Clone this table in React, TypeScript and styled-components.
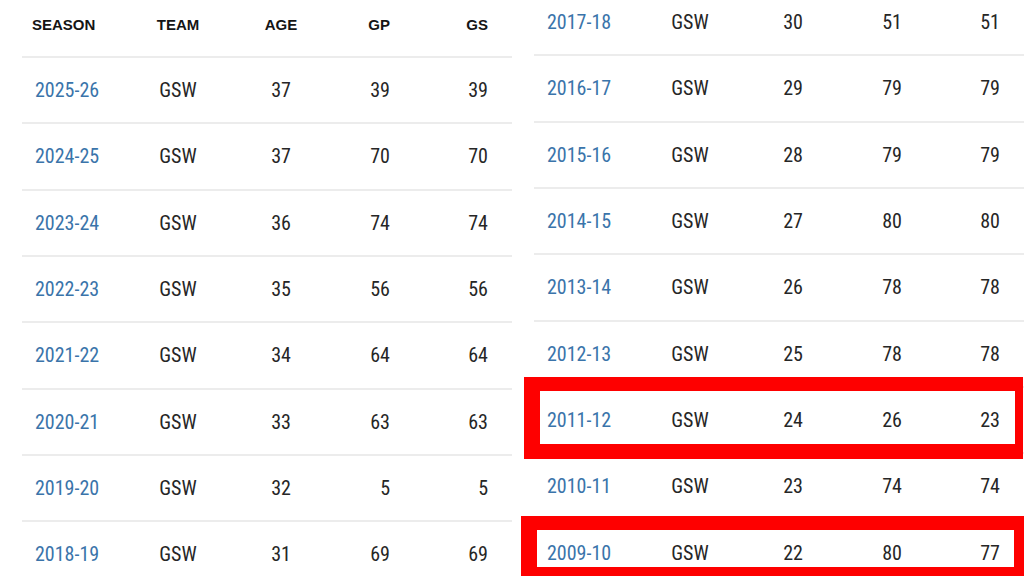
import styled, { createGlobalStyle } from "styled-components";

const GlobalStyle = createGlobalStyle`
  html, body {
    margin: 0;
    padding: 0;
    background: #fff;
    overflow: hidden;
  }
`;

interface IHighlight {
  $top: number;
  $left: number;
  $right: number;
  $bottom: number;
  $border: string;
}

interface IStat {
  season: string;
  age: number;
  gp: number;
  gs: number;
  box?: IHighlight;
}

const Page = styled.div`
  width: 1024px;
  height: 576px;
  display: grid;
  grid-template-columns: 512px 512px;
  overflow: hidden;
  font-family: "Liberation Sans Narrow", "Roboto Condensed", "DejaVu Sans Condensed", Roboto, sans-serif;
`;

const Half = styled.div<{ $shift: number }>`
  display: flex;
  flex-direction: column;
  padding-left: 22px;
  margin-top: ${(p) => p.$shift}px;
`;

const Cols = styled.div`
  display: grid;
  grid-template-columns: 108px 96px 110px 54px 98px;
  padding-right: 24px;
  align-items: center;
  border-bottom: 2px solid #ececec;
  box-sizing: border-box;
  position: relative;
`;

const HeadRow = styled(Cols)`
  height: 58px;
  padding-bottom: 7px;
`;

const Row = styled(Cols)`
  height: 66.33px;
  flex-shrink: 0;
`;

const Th = styled.div<{ $align: string }>`
  font-family: "Liberation Sans", Arial, sans-serif;
  font-size: 15px;
  font-weight: 700;
  color: #151515;
  text-align: ${(p) => p.$align};
  padding-left: ${(p) => (p.$align === "left" ? "10px" : "0")};
`;

const Td = styled.div<{ $align: string }>`
  font-size: 20px;
  color: #262626;
  text-align: ${(p) => p.$align};
`;

const SeasonLink = styled.a`
  font-size: 20px;
  color: #3a74aa;
  text-decoration: none;
  padding-left: 13px;
`;

const Highlight = styled.span<IHighlight>`
  position: absolute;
  top: ${(p) => p.$top}px;
  left: ${(p) => p.$left}px;
  right: ${(p) => p.$right}px;
  bottom: ${(p) => p.$bottom}px;
  border: solid #fe0000;
  border-width: ${(p) => p.$border};
  pointer-events: none;
`;

const leftStats: IStat[] = [
  { season: "2025-26", age: 37, gp: 39, gs: 39 },
  { season: "2024-25", age: 37, gp: 70, gs: 70 },
  { season: "2023-24", age: 36, gp: 74, gs: 74 },
  { season: "2022-23", age: 35, gp: 56, gs: 56 },
  { season: "2021-22", age: 34, gp: 64, gs: 64 },
  { season: "2020-21", age: 33, gp: 63, gs: 63 },
  { season: "2019-20", age: 32, gp: 5, gs: 5 },
  { season: "2018-19", age: 31, gp: 69, gs: 69 },
];

const rightStats: IStat[] = [
  { season: "2017-18", age: 30, gp: 51, gs: 51 },
  { season: "2016-17", age: 29, gp: 79, gs: 79 },
  { season: "2015-16", age: 28, gp: 79, gs: 79 },
  { season: "2014-15", age: 27, gp: 80, gs: 80 },
  { season: "2013-14", age: 26, gp: 78, gs: 78 },
  { season: "2012-13", age: 25, gp: 78, gs: 78 },
  {
    season: "2011-12",
    age: 24,
    gp: 26,
    gs: 23,
    box: { $top: -10.5, $left: -10, $right: 1, $bottom: -6.5, $border: "14px 8px 15px 16px" },
  },
  { season: "2010-11", age: 23, gp: 74, gs: 74 },
  {
    season: "2009-10",
    age: 22,
    gp: 80,
    gs: 77,
    box: { $top: -4.5, $left: -13, $right: -4, $bottom: 5.5, $border: "14px 14px 12px 16px" },
  },
];

function StatRow({ stat }: { stat: IStat }) {
  return (
    <Row>
      <SeasonLink href="#">{stat.season}</SeasonLink>
      <Td $align="center">GSW</Td>
      <Td $align="center">{stat.age}</Td>
      <Td $align="right">{stat.gp}</Td>
      <Td $align="right">{stat.gs}</Td>
      {stat.box && <Highlight {...stat.box} />}
    </Row>
  );
}

export default function App() {
  return (
    <>
      <GlobalStyle />
      <Page>
        <Half $shift={0}>
          <HeadRow>
            <Th $align="left">SEASON</Th>
            <Th $align="center">TEAM</Th>
            <Th $align="center">AGE</Th>
            <Th $align="right">GP</Th>
            <Th $align="right">GS</Th>
          </HeadRow>
          {leftStats.map((s) => (
            <StatRow key={s.season} stat={s} />
          ))}
        </Half>
        <Half $shift={-10}>
          {rightStats.map((s) => (
            <StatRow key={s.season} stat={s} />
          ))}
        </Half>
      </Page>
    </>
  );
}
